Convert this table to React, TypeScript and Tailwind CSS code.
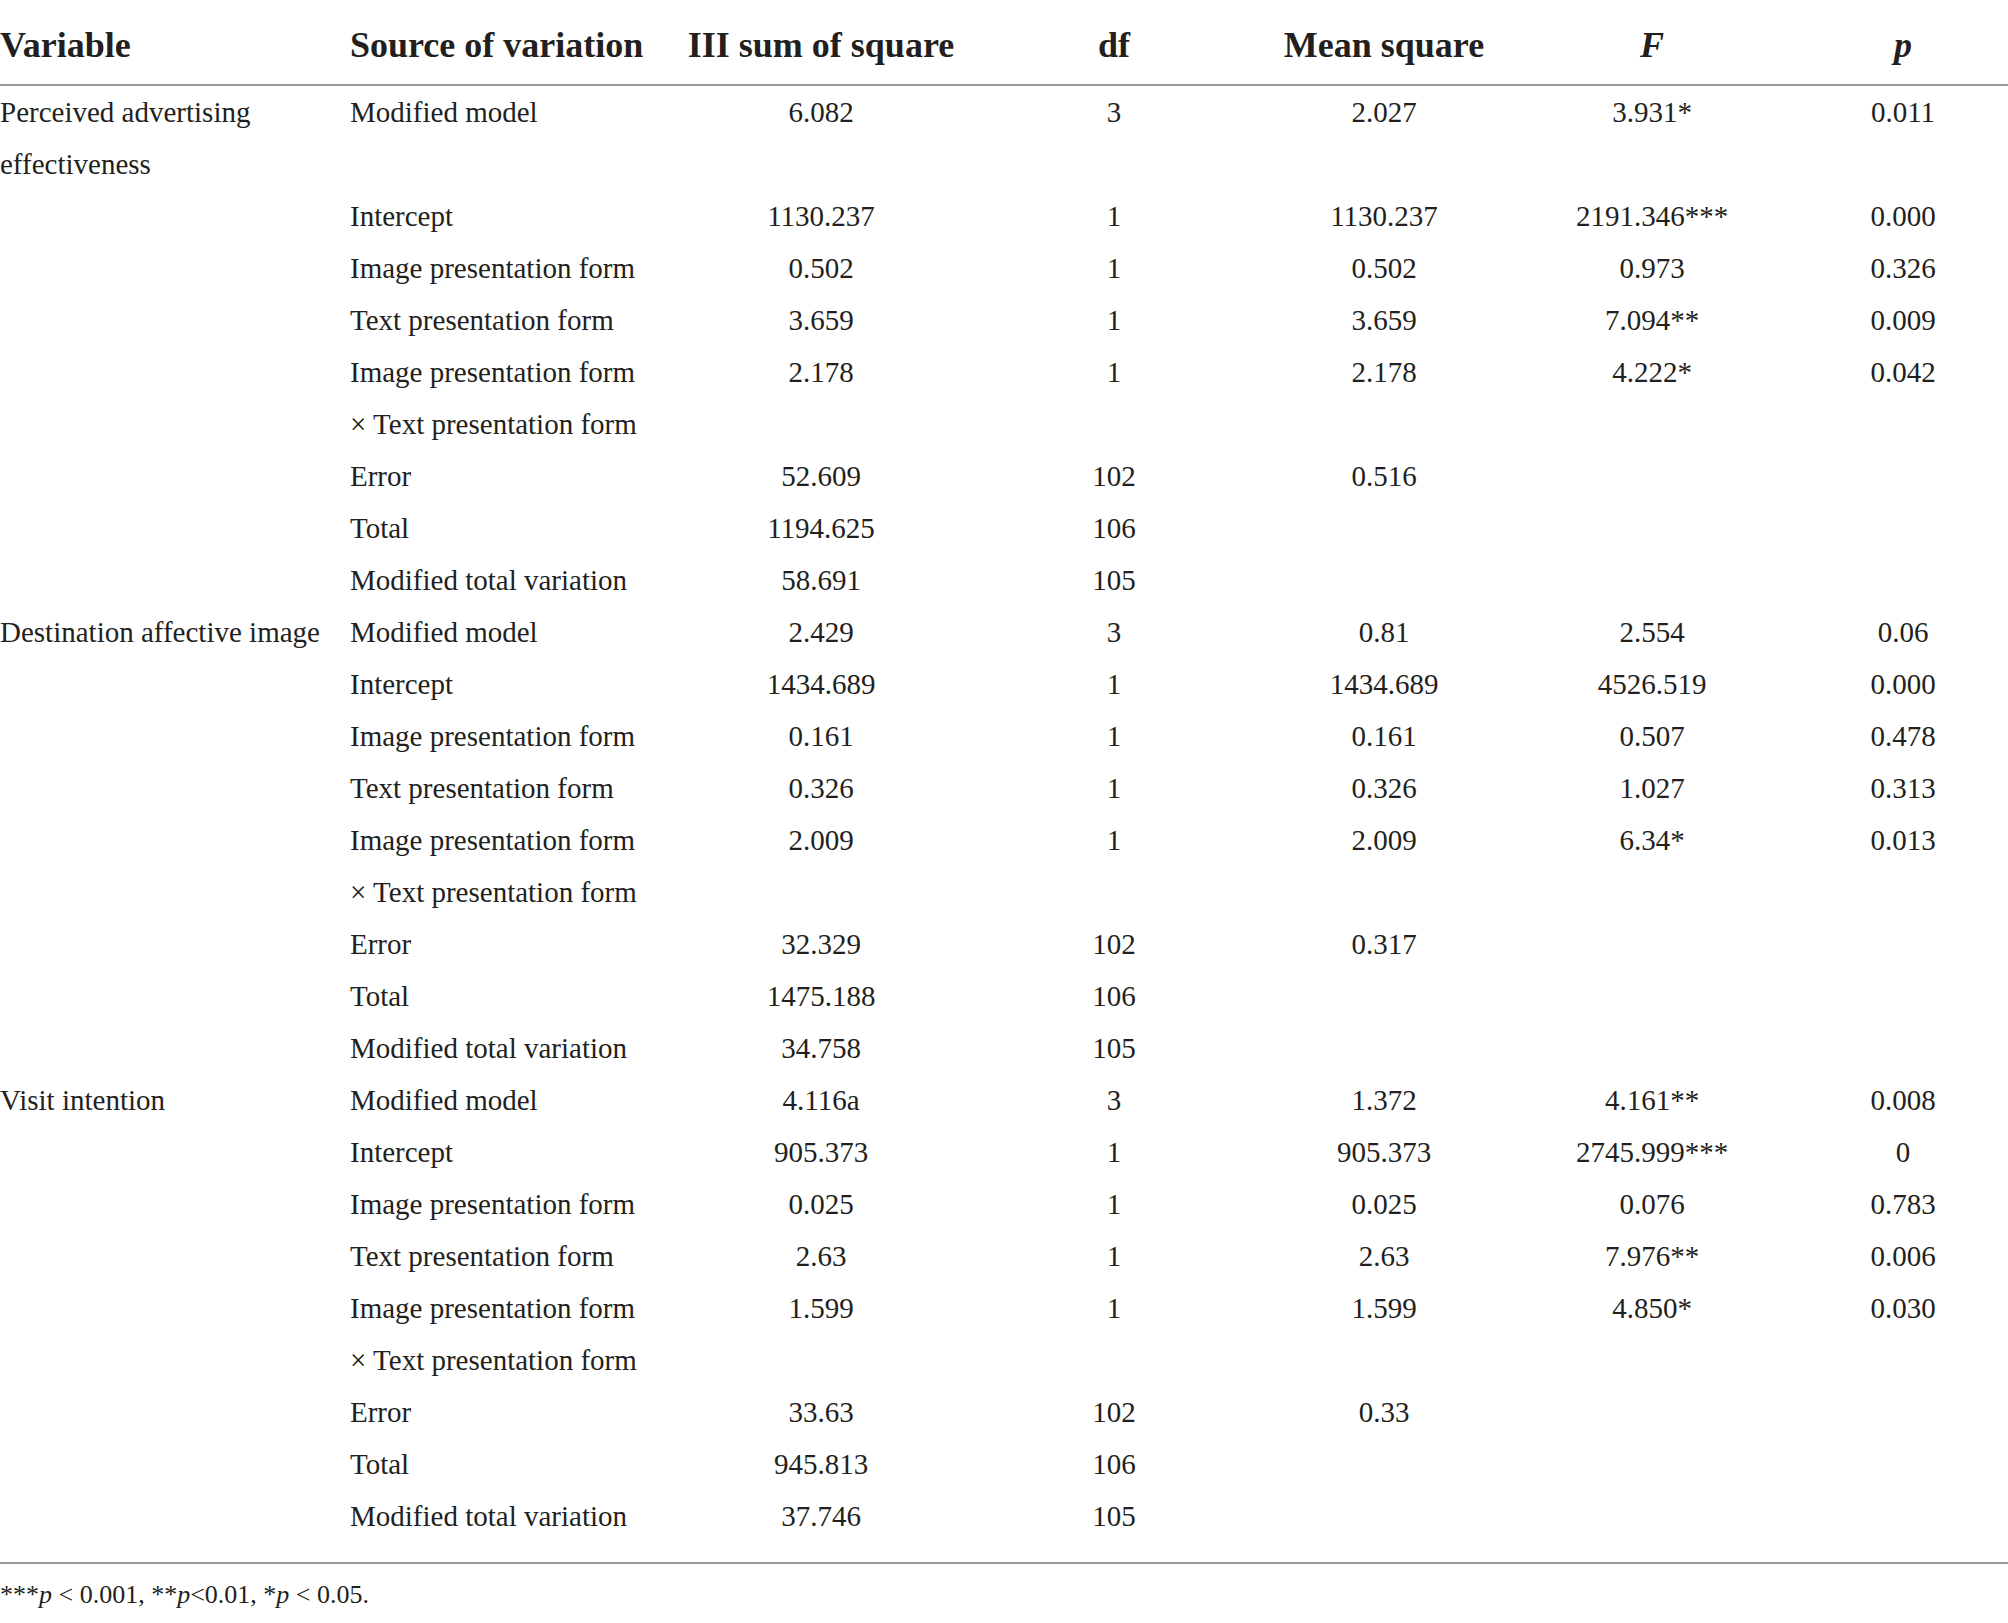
import React from "react";

type Row = { v?: string; s: React.ReactNode; ss?: string; df?: string; ms?: string; f?: string; p?: string };

const data: Row[] = [
  { v: "Perceived advertising", s: "Modified model", ss: "6.082", df: "3", ms: "2.027", f: "3.931*", p: "0.011" },
  { v: "effectiveness", s: "" },
  { s: "Intercept", ss: "1130.237", df: "1", ms: "1130.237", f: "2191.346***", p: "0.000" },
  { s: "Image presentation form", ss: "0.502", df: "1", ms: "0.502", f: "0.973", p: "0.326" },
  { s: "Text presentation form", ss: "3.659", df: "1", ms: "3.659", f: "7.094**", p: "0.009" },
  { s: "Image presentation form", ss: "2.178", df: "1", ms: "2.178", f: "4.222*", p: "0.042" },
  { s: "× Text presentation form" },
  { s: "Error", ss: "52.609", df: "102", ms: "0.516" },
  { s: "Total", ss: "1194.625", df: "106" },
  { s: "Modified total variation", ss: "58.691", df: "105" },
  { v: "Destination affective image", s: "Modified model", ss: "2.429", df: "3", ms: "0.81", f: "2.554", p: "0.06" },
  { s: "Intercept", ss: "1434.689", df: "1", ms: "1434.689", f: "4526.519", p: "0.000" },
  { s: "Image presentation form", ss: "0.161", df: "1", ms: "0.161", f: "0.507", p: "0.478" },
  { s: "Text presentation form", ss: "0.326", df: "1", ms: "0.326", f: "1.027", p: "0.313" },
  { s: "Image presentation form", ss: "2.009", df: "1", ms: "2.009", f: "6.34*", p: "0.013" },
  { s: "× Text presentation form" },
  { s: "Error", ss: "32.329", df: "102", ms: "0.317" },
  { s: "Total", ss: "1475.188", df: "106" },
  { s: "Modified total variation", ss: "34.758", df: "105" },
  { v: "Visit intention", s: "Modified model", ss: "4.116a", df: "3", ms: "1.372", f: "4.161**", p: "0.008" },
  { s: "Intercept", ss: "905.373", df: "1", ms: "905.373", f: "2745.999***", p: "0" },
  { s: "Image presentation form", ss: "0.025", df: "1", ms: "0.025", f: "0.076", p: "0.783" },
  { s: "Text presentation form", ss: "2.63", df: "1", ms: "2.63", f: "7.976**", p: "0.006" },
  { s: "Image presentation form", ss: "1.599", df: "1", ms: "1.599", f: "4.850*", p: "0.030" },
  { s: "× Text presentation form" },
  { s: "Error", ss: "33.63", df: "102", ms: "0.33" },
  { s: "Total", ss: "945.813", df: "106" },
  { s: "Modified total variation", ss: "37.746", df: "105" },
];

const grid = "grid grid-cols-[350px_310px_322px_264px_276px_260px_226px]";

export default function App() {
  return (
    <div
      className="w-[2008px] min-h-[1623px] bg-white text-[#231f20]"
      style={{ fontFamily: '"Liberation Serif", "Times New Roman", serif' }}
    >
      <div className={`${grid} h-[86px] border-b-2 border-[#9a9a9a] pt-[6px] items-center text-[36px] font-bold leading-none`}>
        <div>Variable</div>
        <div>Source of variation</div>
        <div className="text-center">III sum of square</div>
        <div className="text-center">df</div>
        <div className="text-center">Mean square</div>
        <div className="text-center italic">F</div>
        <div className="text-center italic pl-4">p</div>
      </div>
      <div className="pb-[20px] text-[29px]">
        {data.map((r, i) => (
          <div key={i} className={`${grid} h-[52px] items-center leading-[52px] whitespace-nowrap`}>
            <div>{r.v ?? ""}</div>
            <div>{r.s}</div>
            <div className="text-center">{r.ss ?? ""}</div>
            <div className="text-center">{r.df ?? ""}</div>
            <div className="text-center">{r.ms ?? ""}</div>
            <div className="text-center">{r.f ?? ""}</div>
            <div className="text-center pl-4">{r.p ?? ""}</div>
          </div>
        ))}
      </div>
      <div className="border-t-2 border-[#9a9a9a] pt-[16px] text-[26px] leading-[30px]">
        ***<i>p</i> &lt; 0.001, **<i>p</i>&lt;0.01, *<i>p</i> &lt; 0.05.
      </div>
    </div>
  );
}
